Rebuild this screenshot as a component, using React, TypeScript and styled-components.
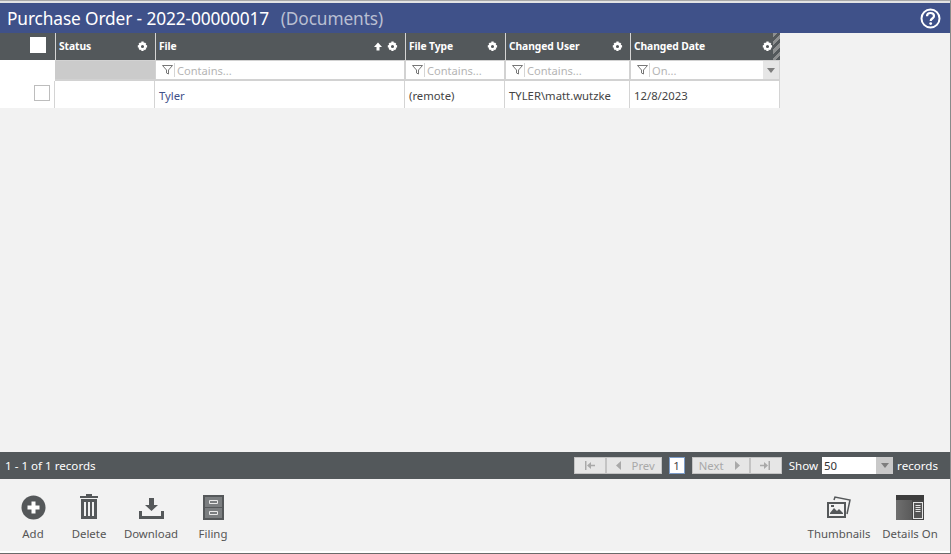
import React from "react";
import styled, { createGlobalStyle } from "styled-components";

const Global = createGlobalStyle`
  html, body { margin: 0; padding: 0; background: #fff; }
  body { font-family: "Noto Sans", "Open Sans", "Liberation Sans", sans-serif; font-size: 12px; overflow: hidden; }
`;
const Page = styled.div`
  width: 951px; height: 554px; box-sizing: border-box; display: flex; flex-direction: column;
  background: #f2f2f2; border-top: 1px solid #a8a8a8; border-bottom: 1px solid #6a6a6a; border-right: 1px solid #8a8a8a; overflow: hidden;
`;
const TopStrip = styled.div`height: 2px; background: #e3e3e3; flex: none;`;
const TitleBar = styled.header`
  height: 30px; flex: none; background: #3f5189; color: #fff; display: flex; align-items: center; box-sizing: border-box;
  justify-content: space-between; padding: 0 9px 0 7px; font-size: 17.3px; letter-spacing: -0.12px;
`;
const TitleText = styled.div`white-space: pre;`;
const TitleMuted = styled.span`color: #b9bfd2; margin-left: 3px;`;
const Grid = styled.div`
  width: 780px; flex: none; display: grid; grid-template-columns: 55px 100px 250px 100px 125px 150px;
`;
const HeadCell = styled.div<{ $first?: boolean }>`
  height: 27px; background: #53585b; color: #fff; font-weight: 700; font-size: 10.3px; box-sizing: border-box;
  border-left: ${p => (p.$first ? "none" : "1px solid #d4d4d4")};
  display: flex; align-items: center; padding: ${p => (p.$first ? "0 0 3px 30px" : "0 7px 0 3px")}; gap: 5px; position: relative; letter-spacing: -0.1px;
`;
const HeadLabel = styled.span`flex: 1; margin-bottom: 1px;`;
const Stripe = styled.div`
  position: absolute; right: 0; top: 0; width: 7px; height: 27px;
  background: repeating-linear-gradient(135deg, #8d8f90 0 3px, #53585b 3px 6px);
`;
const HeadBox = styled.div`width: 16px; height: 16px; background: #fff;`;
const FilterCell = styled.div<{ $blank?: boolean; $grey?: boolean }>`
  height: 21px; box-sizing: border-box; background: ${p => (p.$grey ? "#cbcbcb" : "#fff")};
  border-left: ${p => (p.$blank || p.$grey ? "none" : "1px solid #d2d2d2")};
  border-right: ${p => (p.$blank || p.$grey ? "none" : "1px solid #d2d2d2")};
  border-bottom: ${p => (p.$blank ? "none" : "2px solid #d2d2d2")};
  border-top: ${p => (p.$blank ? "none" : "1px solid #d2d2d2")};
  display: flex; align-items: center; color: #b5b5b5; font-size: 11.1px; padding-left: 6px; position: relative;
`;
const FilterDivider = styled.span`width: 1px; height: 14px; background: #d5d5d5; margin: 0 2px 0 1px;`;
const DropArrow = styled.div`
  position: absolute; right: 0; top: 0; bottom: 0; width: 16px; background: #e6e6e6;
  display: flex; align-items: center; justify-content: center;
`;
const Triangle = styled.i`
  width: 0; height: 0; border-left: 4px solid transparent; border-right: 4px solid transparent; border-top: 5px solid #7d7d7d;
`;
const DataCell = styled.div<{ $link?: boolean; $box?: boolean }>`
  height: 27px; box-sizing: border-box; background: #fff; border-right: 1px solid #d4d4d4;
  color: ${p => (p.$link ? "#3f5189" : "#444")}; font-size: 11.3px; display: flex; align-items: center;
  padding: ${p => (p.$box ? "0 0 4px 34px" : "2px 0 0 4px")};
`;
const RowBox = styled.div`width: 14px; height: 14px; border: 1px solid #bdbdbd;`;
const Spacer = styled.div`flex: 1;`;
const Pager = styled.div`
  height: 27px; flex: none; background: #53585b; color: #fff; display: flex; align-items: center; box-sizing: border-box;
  padding: 0 12px 1px 5px; font-size: 11.6px;
`;
const PagerGroup = styled.div`display: flex; align-items: center; margin-left: auto;`;
const PageButton = styled.div<{ $w: number }>`
  width: ${p => p.$w}px; height: 17px; box-sizing: border-box; background: #e6e6e6; border: 1px solid #c4c4c4;
  color: #a9a9a9; display: flex; align-items: center; justify-content: center; gap: 8px; font-size: 11.3px;
`;
const PageNum = styled.div`
  width: 16px; height: 17px; box-sizing: border-box; background: #fff; border: 1px solid #7c9cc8; color: #444;
  display: flex; align-items: center; justify-content: center; margin: 0 7px 0 7px;
`;
const ShowLabel = styled.span`margin: 0 4px 0 7px;`;
const ShowSelect = styled.div`
  width: 71px; height: 17px; background: #fff; color: #333; display: flex; align-items: center; justify-content: space-between;
  padding-left: 2px; box-sizing: border-box; margin-right: 4px; font-size: 11.4px;
`;
const ShowArrow = styled.div`width: 17px; height: 17px; background: #c9c9c9; display: flex; align-items: center; justify-content: center;`;
const Toolbar = styled.div`
  height: 72px; flex: none; display: flex; align-items: flex-start; padding: 15px 3px 0 0; color: #555; font-size: 11.4px; box-sizing: border-box;
`;
const Tool = styled.div<{ $w: number }>`
  width: ${p => p.$w}px; height: 47px; display: flex; flex-direction: column; align-items: center; justify-content: space-between; white-space: nowrap;
`;
const IconWrap = styled.div`height: 26px; display: flex; align-items: center; justify-content: center;`;
const WhiteLine = styled.div`height: 2px; background: #fff; flex: none;`;

const Gear = () => (
  <svg width="11" height="11" viewBox="0 0 11 11"><path fill="#fff" fillRule="evenodd" d="M4.4.5h2.2l.3 1.400 1-.5 1.400 1.400-.6 1.100 1.400.3v2.200l-1.400.3.6 1.100-1.400 1.400-1.100-.6-.3 1.400H4.400l-.3-1.400-1.100.6-1.400-1.400.6-1.100L.8 6.400V4.200l1.400-.3-.6-1.100L3 1.400l1.100.5zM5.500 3.900a1.500 1.500 0 1 0 0 3.100 1.500 1.500 0 0 0 0-3.100z"/></svg>
);
const UpArrow = () => (
  <svg width="8" height="9" viewBox="0 0 8 9"><path fill="#fff" d="M4 .5 8 5H5.500v3.500h-3V5H0z"/></svg>
);
const Funnel = () => (
  <svg width="11" height="10" viewBox="0 0 11 10"><path fill="none" stroke="#777" d="M.5.5h10L6.500 5v4l-2-1V5z"/></svg>
);
const Head = ({ label, up, stripe }: { label: string; up?: boolean; stripe?: boolean }) => (
  <HeadCell>
    <HeadLabel>{label}</HeadLabel>
    {up && <UpArrow />}
    <Gear />
    {stripe && <Stripe />}
  </HeadCell>
);
const Filter = ({ text, drop }: { text: string; drop?: boolean }) => (
  <FilterCell>
    <Funnel /><FilterDivider />{text}
    {drop && <DropArrow><Triangle /></DropArrow>}
  </FilterCell>
);
const Nav = ({ d }: { d: string }) => (
  <svg width="11" height="9" viewBox="0 0 11 9"><path fill="#a9a9a9" d={d} /></svg>
);

export default function App() {
  return (
    <Page>
      <Global />
      <TopStrip />
      <TitleBar>
        <TitleText>Purchase Order - 2022-00000017  <TitleMuted>(Documents)</TitleMuted></TitleText>
        <svg width="21" height="21" viewBox="0 0 21 21">
          <circle cx="10.500" cy="10.500" r="9" fill="none" stroke="#fff" strokeWidth="2" />
          <path fill="none" stroke="#fff" strokeWidth="2.200" d="M7 8.200c0-2 1.500-3.200 3.500-3.200s3.500 1.200 3.500 3c0 2.600-3.300 2.400-3.300 5" />
          <circle cx="10.700" cy="15.600" r="1.400" fill="#fff" />
        </svg>
      </TitleBar>
      <Grid>
        <HeadCell $first><HeadBox /></HeadCell>
        <Head label="Status" />
        <Head label="File" up />
        <Head label="File Type" />
        <Head label="Changed User" />
        <Head label="Changed Date" stripe />
        <FilterCell $blank />
        <FilterCell $grey />
        <Filter text="Contains..." />
        <Filter text="Contains..." />
        <Filter text="Contains..." />
        <Filter text="On..." drop />
        <DataCell $box><RowBox /></DataCell>
        <DataCell />
        <DataCell $link>Tyler</DataCell>
        <DataCell>(remote)</DataCell>
        <DataCell>TYLER\matt.wutzke</DataCell>
        <DataCell>12/8/2023</DataCell>
      </Grid>
      <Spacer />
      <Pager>
        1 - 1 of 1 records
        <PagerGroup>
          <PageButton $w={32}><Nav d="M1 0h1.500v9H1zM3 4.500 7 1v2.700h4v1.600H7V8z" /></PageButton>
          <PageButton $w={56}><Nav d="M3 4.500 8 0v9z" /><span>Prev</span></PageButton>
          <PageNum>1</PageNum>
          <PageButton $w={58}><span>Next</span><Nav d="M8 4.500 3 0v9z" /></PageButton>
          <PageButton $w={32}><Nav d="M10 0H8.500v9H10zM8 4.500 4 1v2.700H0v1.600h4V8z" /></PageButton>
          <ShowLabel>Show</ShowLabel>
          <ShowSelect>50<ShowArrow><Triangle /></ShowArrow></ShowSelect>
          records
        </PagerGroup>
      </Pager>
      <Toolbar>
        <Tool $w={66}>
          <IconWrap><svg width="25" height="25" viewBox="0 0 25 25"><circle cx="12.500" cy="12.500" r="12" fill="#55585a" /><path fill="#fff" d="M10.500 6.500h4v4h4v4h-4v4h-4v-4h-4v-4h4z" /></svg></IconWrap>
          Add
        </Tool>
        <Tool $w={46}>
          <IconWrap><svg width="20" height="26" viewBox="0 0 20 26"><path fill="#55585a" fillRule="evenodd" d="M7 0h6v2h6v2H1V2h6zM2 5h16v20H2zM5 8v14h2V8zM9 8v14h2V8zM13 8v14h2V8z" /></svg></IconWrap>
          Delete
        </Tool>
        <Tool $w={78}>
          <IconWrap><svg width="25" height="24" viewBox="0 0 25 24"><path fill="#55585a" d="M10 3h5v7h4l-6.500 6L6 10h4zM0 16h3v5h19v-5h3v8H0z" /></svg></IconWrap>
          Download
        </Tool>
        <Tool $w={46}>
          <IconWrap>
            <svg width="21" height="25" viewBox="0 0 21 25">
              <rect width="21" height="25" fill="#55585a" />
              <rect x="2" y="2" width="17" height="10" fill="#7b7e80" />
              <rect x="2" y="13" width="17" height="10" fill="#7b7e80" />
              <path fill="none" stroke="#e8e8e8" d="M6.500 5.500h8v3h-8zM6.500 16.500h8v3h-8z" />
            </svg>
          </IconWrap>
          Filing
        </Tool>
        <Spacer />
        <Tool $w={68}>
          <IconWrap><svg width="25" height="24" viewBox="0 0 25 24"><path fill="#55585a" fillRule="evenodd" d="M0 7h19v16H0zM2 9v12h15V9zM3 18l4-5 3 3 2-2 4 4v1H3zM4 10h3v2H4z" /><path fill="none" stroke="#55585a" strokeWidth="1.500" d="M7 5l1-3 15 3-3 14" /></svg></IconWrap>
          Thumbnails
        </Tool>
        <Tool $w={74}>
          <IconWrap>
            <svg width="28" height="25" viewBox="0 0 28 25">
              <defs><linearGradient id="dg" x1="0" y1="0" x2="1" y2="0"><stop offset="0" stopColor="#6f6f6f" /><stop offset="1" stopColor="#4a4a4a" /></linearGradient></defs>
              <rect width="28" height="25" fill="url(#dg)" /><rect width="28" height="5" fill="#3d3d3d" />
              <rect x="16" y="5" width="12" height="20" fill="#444" />
              <rect x="17.500" y="7.500" width="9" height="16" fill="#555" stroke="#e4e4e4" />
              <path stroke="#e4e4e4" d="M19.500 10.500h5M19.500 12.500h5M19.500 14.500h5M19.500 16.500h5" />
            </svg>
          </IconWrap>
          Details On
        </Tool>
      </Toolbar>
      <WhiteLine />
    </Page>
  );
}
